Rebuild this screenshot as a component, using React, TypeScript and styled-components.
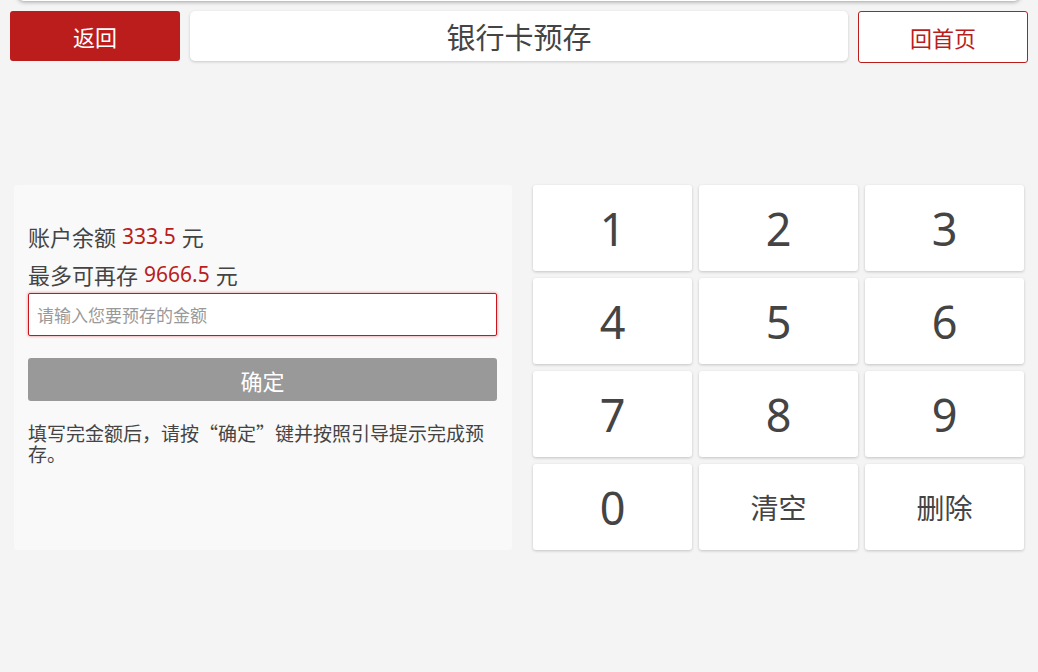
import React from "react";
import styled, { createGlobalStyle } from "styled-components";

const Global = createGlobalStyle`
  html, body {
    margin: 0;
    padding: 0;
    background: #f4f4f4;
    font-family: "Noto Sans", "Noto Sans CJK SC", sans-serif;
    color: #444;
  }
  * { box-sizing: border-box; }
`;

const Page = styled.div`
  width: 1038px;
  height: 672px;
  overflow: hidden;
  background: #f4f4f4;
`;

const TopEdge = styled.div`
  height: 8px;
  margin: -7px 18px 0;
  background: #fff;
  border-radius: 0 0 6px 6px;
  box-shadow: 0 1px 4px rgba(0, 0, 0, 0.35);
`;

const NavBar = styled.div`
  display: flex;
  gap: 10px;
  padding: 10px 10px 0;
  height: 62px;
`;

const NavButton = styled.div<{ $primary?: boolean }>`
  width: 170px;
  border-radius: 3px;
  display: flex;
  align-items: center;
  justify-content: center;
  font-size: 22px;
  font-family: "Noto Sans CJK SC", sans-serif;
  background: ${(p) => (p.$primary ? "#bb1d1d" : "#fff")};
  color: ${(p) => (p.$primary ? "#fff" : "#bb1d1d")};
  border: ${(p) => (p.$primary ? "none" : "1px solid #bb1d1d")};
  height: ${(p) => (p.$primary ? "50px" : "52px")};
`;

const Title = styled.div`
  flex: 1;
  height: 50px;
  background: #fff;
  border-radius: 5px;
  box-shadow: 0 1px 3px rgba(0, 0, 0, 0.18);
  display: flex;
  align-items: center;
  justify-content: center;
  font-size: 29px;
  font-family: "Noto Sans CJK SC", sans-serif;
  color: #444;
`;

const Main = styled.div`
  display: flex;
  gap: 21px;
  padding: 122px 14px 0;
`;

const Panel = styled.div`
  width: 498px;
  height: 365px;
  background: #f9f9f9;
  border-radius: 3px;
  padding: 32px 14px 0 14px;
  display: flex;
  flex-direction: column;
`;

const InfoLine = styled.div`
  height: 38px;
  display: flex;
  align-items: center;
  gap: 6px;
  font-size: 22px;
  font-family: "Noto Sans CJK SC", sans-serif;
  color: #444;
`;

const Amount = styled.span`
  color: #bb1d1d;
  font-family: "Noto Sans", sans-serif;
  font-size: 21px;
`;

const Input = styled.input`
  flex: none;
  width: 469px;
  height: 43px;
  border: 1px solid #c8161d;
  border-radius: 2px;
  box-shadow: 0 0 3px rgba(200, 22, 29, 0.55);
  padding: 0 8px;
  font-size: 17px;
  font-family: "Noto Sans CJK SC", sans-serif;
  outline: none;
  &::placeholder { color: #999; }
`;

const Confirm = styled.div`
  margin-top: 22px;
  width: 469px;
  height: 43px;
  background: #999;
  border-radius: 3px;
  color: #fff;
  font-size: 22px;
  font-family: "Noto Sans CJK SC", sans-serif;
  display: flex;
  align-items: center;
  justify-content: center;
`;

const Hint = styled.p`
  margin: 21px 0 0;
  width: 469px;
  font-size: 19px;
  line-height: 21px;
  font-family: "Noto Sans CJK SC", sans-serif;
  color: #444;
`;

const Keypad = styled.div`
  display: grid;
  grid-template-columns: repeat(3, 159px);
  grid-auto-rows: 86px;
  gap: 7px;
`;

const Key = styled.div<{ $text?: boolean }>`
  background: #fff;
  border-radius: 3px;
  box-shadow: 0 1px 3px rgba(0, 0, 0, 0.2);
  display: flex;
  align-items: center;
  justify-content: center;
  color: #444;
  font-size: ${(p) => (p.$text ? "28px" : "45px")};
  font-family: ${(p) => (p.$text ? '"Noto Sans CJK SC", sans-serif' : '"Noto Sans", sans-serif')};
`;

const keys = ["1", "2", "3", "4", "5", "6", "7", "8", "9", "0", "清空", "删除"];

export default function App() {
  return (
    <Page>
      <Global />
      <TopEdge />
      <NavBar>
        <NavButton $primary>返回</NavButton>
        <Title>银行卡预存</Title>
        <NavButton>回首页</NavButton>
      </NavBar>
      <Main>
        <Panel>
          <InfoLine>
            <span>账户余额</span>
            <Amount>333.5</Amount>
            <span>元</span>
          </InfoLine>
          <InfoLine>
            <span>最多可再存</span>
            <Amount>9666.5</Amount>
            <span>元</span>
          </InfoLine>
          <Input placeholder="请输入您要预存的金额" />
          <Confirm>确定</Confirm>
          <Hint>填写完金额后，请按“确定”键并按照引导提示完成预存。</Hint>
        </Panel>
        <Keypad>
          {keys.map((k) => (
            <Key key={k} $text={k.length > 1}>
              {k}
            </Key>
          ))}
        </Keypad>
      </Main>
    </Page>
  );
}
